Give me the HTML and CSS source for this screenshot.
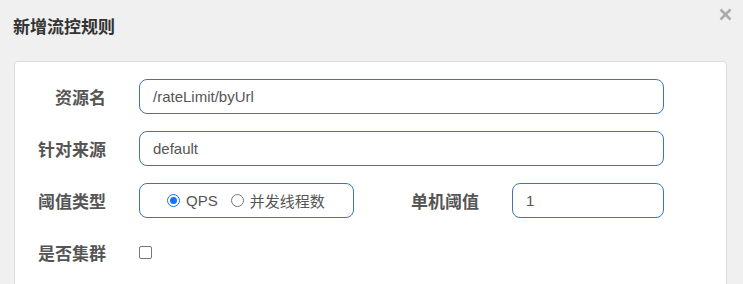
FILE: index.html
```html
<!DOCTYPE html>
<html lang="zh">
<head>
<meta charset="utf-8">
<title>新增流控规则</title>
<link rel="stylesheet" href="styles.css">
</head>
<body>
<div class="dialog">
  <div class="header">
    <h3 class="title">新增流控规则</h3>
    <svg class="close" width="13" height="13" viewBox="0 0 13 13"><path d="M1.5 1.5 L11.5 11.5 M11.5 1.5 L1.5 11.5" stroke="#ababab" stroke-width="2.6" fill="none"/></svg>
  </div>
  <div class="card">
    <div class="row">
      <label class="label">资源名</label>
      <div class="input wide">/rateLimit/byUrl</div>
    </div>
    <div class="row">
      <label class="label">针对来源</label>
      <div class="input wide">default</div>
    </div>
    <div class="row">
      <label class="label">阈值类型</label>
      <div class="input radios">
        <span class="radio on"></span><span class="rtext">QPS</span>
        <span class="radio"></span><span class="rtext">并发线程数</span>
      </div>
      <label class="label2">单机阈值</label>
      <div class="input small">1</div>
    </div>
    <div class="row">
      <label class="label">是否集群</label>
      <span class="checkbox"></span>
    </div>
  </div>
</div>
</body>
</html>
```
FILE: styles.css
```css
html, body {
  margin: 0;
  padding: 0;
  background: #f0f0f0;
  font-family: "Liberation Sans", "Noto Sans CJK SC", sans-serif;
}
.dialog {
  width: 743px;
  height: 284px;
  overflow: hidden;
}
.header {
  position: relative;
  height: 61px;
}
.title {
  margin: 0;
  padding: 14px 0 0 13px;
  font-family: "Noto Sans CJK SC", sans-serif;
  font-size: 17px;
  font-weight: bold;
  color: #333;
  line-height: 24px;
}
.close {
  position: absolute;
  left: 719px;
  top: 8px;
}
.card {
  margin-left: 14px;
  width: 713px;
  height: 240px;
  background: #fff;
  border: 1px solid #ddd;
  border-radius: 4px;
  padding-top: 17px;
  box-sizing: border-box;
}
.row {
  display: flex;
  align-items: center;
  height: 35px;
  margin-bottom: 17px;
}
.label {
  width: 91px;
  text-align: right;
  margin-right: 33px;
  font-family: "Noto Sans CJK SC", sans-serif;
  font-size: 17px;
  font-weight: bold;
  color: #555;
}
.label2 {
  margin-left: 57px;
  margin-right: 33px;
  font-family: "Noto Sans CJK SC", sans-serif;
  font-size: 17px;
  font-weight: bold;
  color: #555;
}
.input {
  height: 35px;
  box-sizing: border-box;
  border: 1px solid #3a78b5;
  border-radius: 8px;
  padding: 0 13px;
  display: flex;
  align-items: center;
  font-size: 15px;
  color: #555;
}
.wide { width: 525px; }
.small { width: 152px; }
.radios {
  width: 215px;
  padding-left: 27px;
}
.radio {
  width: 11px;
  height: 11px;
  border: 1px solid #777;
  border-radius: 50%;
  box-sizing: content-box;
  margin-right: 6px;
  position: relative;
}
.radio.on {
  border-color: #1a73e8;
  background: #fff;
}
.radio.on::after {
  content: "";
  position: absolute;
  left: 2px;
  top: 2px;
  width: 7px;
  height: 7px;
  border-radius: 50%;
  background: #1a73e8;
}
.rtext {
  margin-right: 13px;
  font-size: 15px;
  font-family: "Liberation Sans", "Noto Sans CJK SC", sans-serif;
}
.checkbox {
  width: 11px;
  height: 11px;
  border: 1px solid #767676;
  border-radius: 2px;
}
```
